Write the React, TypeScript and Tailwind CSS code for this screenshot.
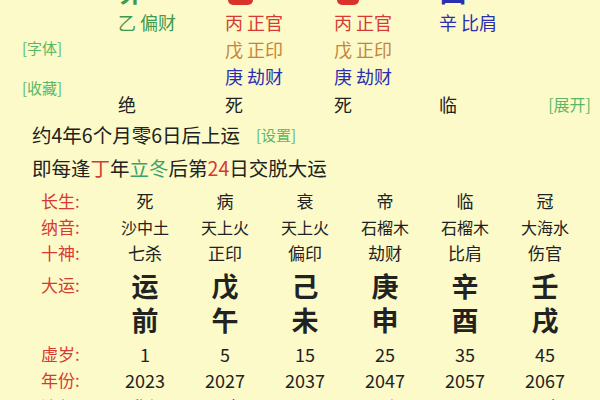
import React from 'react';

const cols = [
  { cs: '死', ny: '沙中土', ss: '七杀', g: '运', z: '前', age: '1', year: '2023', ln: '癸卯' },
  { cs: '病', ny: '天上火', ss: '正印', g: '戊', z: '午', age: '5', year: '2027', ln: '丁未' },
  { cs: '衰', ny: '天上火', ss: '偏印', g: '己', z: '未', age: '15', year: '2037', ln: '丁巳' },
  { cs: '帝', ny: '石榴木', ss: '劫财', g: '庚', z: '申', age: '25', year: '2047', ln: '丁卯' },
  { cs: '临', ny: '石榴木', ss: '比肩', g: '辛', z: '酉', age: '35', year: '2057', ln: '丁丑' },
  { cs: '冠', ny: '大海水', ss: '伤官', g: '壬', z: '戌', age: '45', year: '2067', ln: '丁亥' },
];

function Label({ children }: { children: React.ReactNode }) {
  return <div className="pl-[41px] text-left text-[17px] leading-[26px] text-[#d63a33]">{children}</div>;
}

export default function App() {
  return (
    <div className="h-[400px] w-[600px] overflow-hidden bg-[#fcfac8] font-['Noto_Sans_CJK_SC','Noto_Sans',sans-serif] text-[#222]">
      {/* top: pillars (hidden stems) */}
      <div className="flex">
        <div className="flex w-[118px] shrink-0 flex-col pl-[22px] pt-[38px] text-[15px] leading-[20px] text-[#5ab865]">
          <span>[字体]</span>
          <span className="mt-[20px]">[收藏]</span>
        </div>
        <div className="grid flex-1 grid-cols-[107px_107px_107px_1fr] text-[18px] leading-[27px]">
          {/* cut-off branch glyphs */}
          <div className="h-[9px] overflow-hidden">
            <div className="-mt-[24px] text-[28px] font-bold leading-[28px] text-[#3d9a4f]">卯</div>
          </div>
          <div className="h-[9px] overflow-hidden">
            <div className="-mt-[21px] ml-[3px] h-[26px] w-[25px] rounded-[5px] bg-[#d8322b]" />
          </div>
          <div className="h-[9px] overflow-hidden">
            <div className="-mt-[21px] ml-[5px] h-[26px] w-[22px] rounded-[5px] bg-[#d8322b]" />
          </div>
          <div className="h-[9px] overflow-hidden">
            <div className="-mt-[24px] text-[28px] font-bold leading-[28px] text-[#2a2fb0]">酉</div>
          </div>

          <div className="text-[#3d9a4f]">乙 偏财</div>
          <div className="text-[#d63a33]">丙 正官</div>
          <div className="pl-[2px] text-[#d63a33]">丙 正官</div>
          <div className="text-[#2a2fb0]">辛 比肩</div>

          <div />
          <div className="text-[#c4843c]">戊 正印</div>
          <div className="pl-[2px] text-[#c4843c]">戊 正印</div>
          <div />

          <div />
          <div className="text-[#2a2fb0]">庚 劫财</div>
          <div className="pl-[2px] text-[#2a2fb0]">庚 劫财</div>
          <div />

          <div className="leading-[28px]">绝</div>
          <div className="leading-[28px]">死</div>
          <div className="pl-[2px] leading-[28px]">死</div>
          <div className="flex justify-between pr-[9px] leading-[28px]">
            <span>临</span>
            <span className="text-[16px] text-[#5ab865]">[展开]</span>
          </div>
        </div>
      </div>

      {/* start of luck */}
      <div className="pl-[32px] text-[19.5px] leading-[33px]">
        <div className="flex items-center">
          <span>约4年6个月零6日后上运</span>
          <span className="ml-[16px] text-[15px] text-[#5ab865]">[设置]</span>
        </div>
        <div>
          即每逢<span className="text-[#d63a33]">丁</span>年<span className="text-[#3aa36a]">立冬</span>后第
          <span className="text-[#d63a33]">24</span>日交脱大运
        </div>
      </div>

      {/* luck table */}
      <div className="mt-[4px] grid grid-cols-[105px_repeat(6,80px)] items-center text-center">
        <Label>长生:</Label>
        {cols.map((c, i) => (
          <div key={'cs' + i} className="text-[17px] leading-[26px]">{c.cs}</div>
        ))}
        <Label>纳音:</Label>
        {cols.map((c, i) => (
          <div key={'ny' + i} className="text-[16px] leading-[26px]">{c.ny}</div>
        ))}
        <Label>十神:</Label>
        {cols.map((c, i) => (
          <div key={'ss' + i} className="text-[17px] leading-[26px]">{c.ss}</div>
        ))}
        <div className="mt-[3px] self-start pt-[3px]">
          <Label>大运:</Label>
        </div>
        {cols.map((c, i) => (
          <div key={'g' + i} className="mt-[3px] text-[27px] font-bold leading-[34px]">{c.g}</div>
        ))}
        <div />
        {cols.map((c, i) => (
          <div key={'z' + i} className="text-[27px] font-bold leading-[34px]">{c.z}</div>
        ))}
        <div className="mt-[4px]">
          <Label>虚岁:</Label>
        </div>
        {cols.map((c, i) => (
          <div key={'a' + i} className="mt-[4px] text-[18px] leading-[26px]">{c.age}</div>
        ))}
        <Label>年份:</Label>
        {cols.map((c, i) => (
          <div key={'y' + i} className="text-[18px] leading-[26px]">{c.year}</div>
        ))}
        <div className="mt-[1px]">
          <Label>流年:</Label>
        </div>
        {cols.map((c, i) => (
          <div key={'l' + i} className="mt-[1px] text-[17px] leading-[26px]">{c.ln}</div>
        ))}
      </div>
    </div>
  );
}
